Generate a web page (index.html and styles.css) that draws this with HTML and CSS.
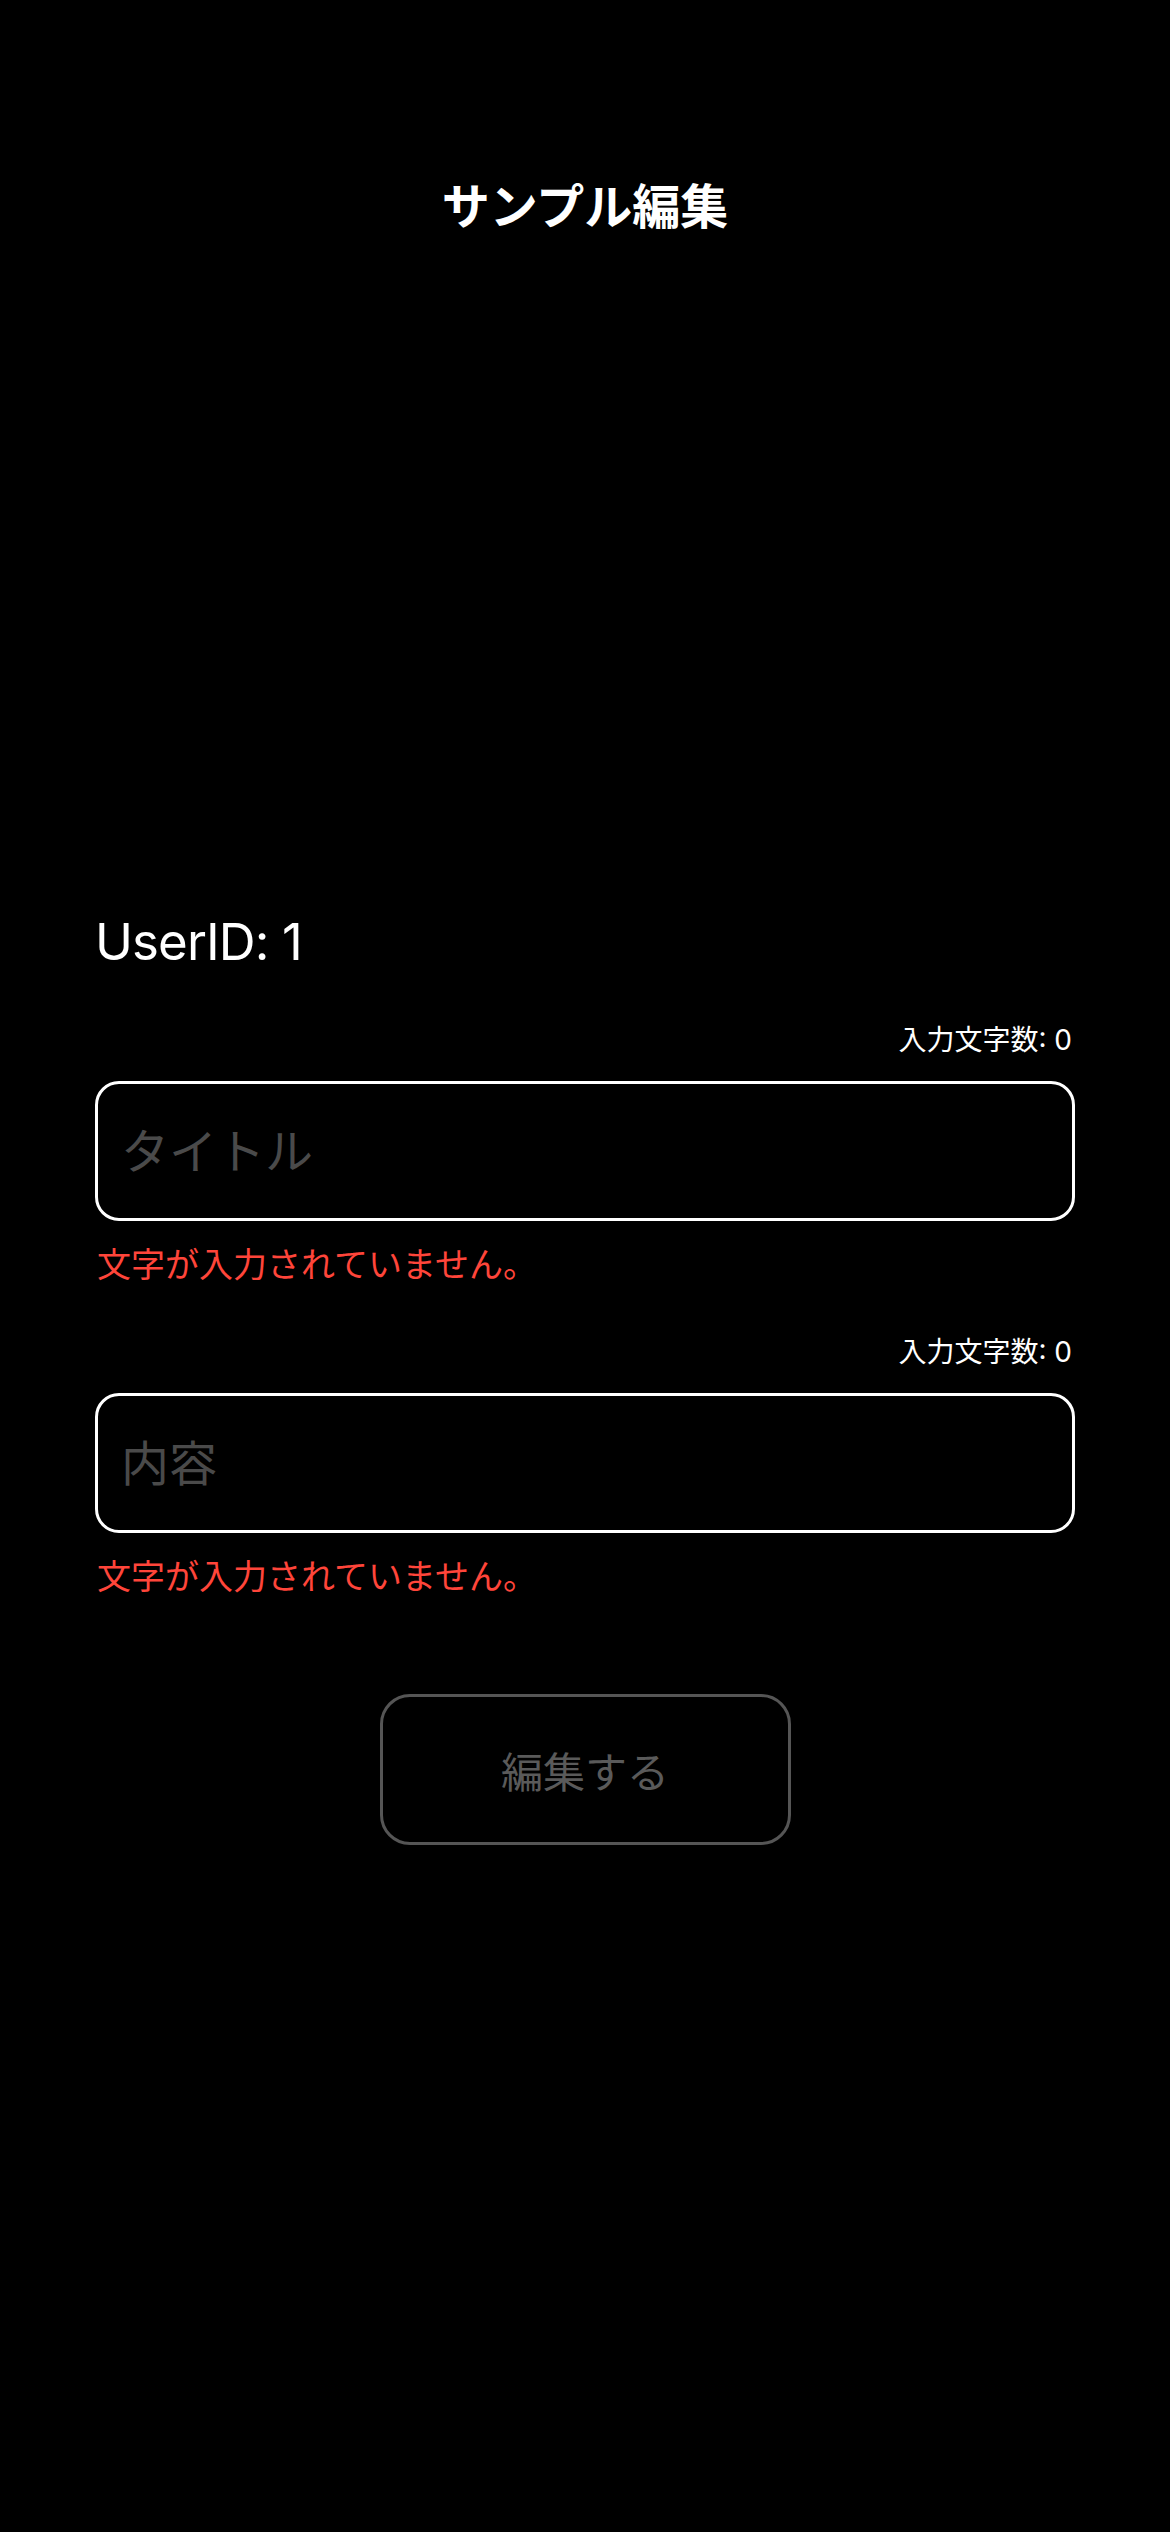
FILE: index.html
```html
<!DOCTYPE html>
<html lang="ja">
<head>
<meta charset="utf-8">
<title>サンプル編集</title>
<link rel="stylesheet" href="styles.css">
</head>
<body>
<div class="screen">
  <header class="nav">
    <h1 class="nav-title">サンプル編集</h1>
  </header>
  <main class="form">
    <p class="user-id">UserID: 1</p>
    <div class="field">
      <p class="count">入力文字数: 0</p>
      <input class="text-input" type="text" placeholder="タイトル">
      <p class="error">文字が入力されていません。</p>
    </div>
    <div class="field">
      <p class="count">入力文字数: 0</p>
      <input class="text-input" type="text" placeholder="内容">
      <p class="error">文字が入力されていません。</p>
    </div>
    <div class="actions">
      <button class="submit" type="button" disabled>編集する</button>
    </div>
  </main>
</div>
</body>
</html>
```
FILE: styles.css
```css
* {
  box-sizing: border-box;
}
html, body {
  margin: 0;
  padding: 0;
  background: #000;
}
body {
  font-family: "Inter", "Noto Sans CJK JP", sans-serif;
  color: #fff;
}
.screen {
  width: 1170px;
  min-height: 2532px;
  background: #000;
}
.nav {
  padding-top: 178px;
  display: flex;
  justify-content: center;
}
.nav-title {
  margin: 0;
  font-size: 48px;
  line-height: 58px;
  font-weight: 700;
  color: #fff;
}
.form {
  margin-top: 675px;
  padding: 0 95px;
  display: flex;
  flex-direction: column;
  gap: 49px;
}
.user-id {
  margin: 0;
  font-size: 51px;
  line-height: 62px;
  letter-spacing: -0.9px;
  color: #fff;
}
.field {
  display: flex;
  flex-direction: column;
}
.count {
  margin: 0 3px 23px 0;
  text-align: right;
  font-size: 28px;
  line-height: 36px;
  color: #fff;
}
.text-input {
  display: block;
  width: 100%;
  height: 140px;
  margin: 0;
  padding: 0 23px;
  border: 3px solid #fff;
  border-radius: 24px;
  background: #000;
  color: #fff;
  font-family: inherit;
  font-size: 48px;
  outline: none;
}
.text-input::placeholder {
  color: #4a4a4a;
  opacity: 1;
}
.error {
  margin: 24px 0 0 2px;
  font-size: 34px;
  line-height: 40px;
  color: #ff453a;
}
.actions {
  display: flex;
  justify-content: center;
  margin-top: 48px;
}
.submit {
  width: 411px;
  height: 151px;
  border: 3px solid #555;
  border-radius: 30px;
  background: transparent;
  color: #5a5a5a;
  font-family: inherit;
  font-size: 42px;
}
```
